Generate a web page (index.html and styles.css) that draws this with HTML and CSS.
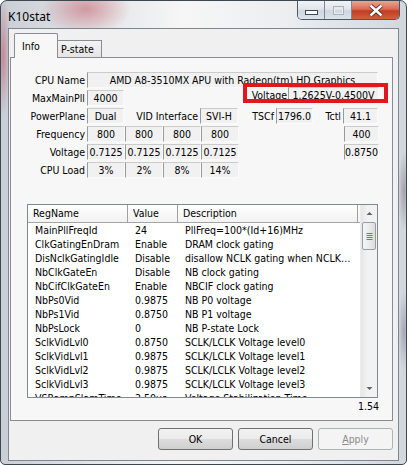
FILE: index.html
```html
<!DOCTYPE html>
<html>
<head>
<meta charset="utf-8">
<link rel="stylesheet" href="styles.css">
</head>
<body>
<div class="window">
  <div class="titlebar">
    <span class="title">K10stat</span>
    <div class="caption">
      <div class="cb cb-min">
        <svg width="27" height="18" viewBox="0 0 27 18"><rect x="7.5" y="9.5" width="12" height="4" fill="#fff" stroke="#3e4a57"/></svg>
      </div>
      <div class="cb cb-max">
        <svg width="27" height="18" viewBox="0 0 27 18"><rect x="8.5" y="5.5" width="10" height="8" fill="none" stroke="#a9b2bd"/><rect x="9.5" y="7.5" width="8" height="5" fill="none" stroke="#e8ecf0"/></svg>
      </div>
      <div class="cb cb-close">
        <svg width="48" height="18" viewBox="0 0 48 18"><path d="M18.5 4.5 L29.5 14.5 M29.5 4.5 L18.5 14.5" stroke="#4a2a24" stroke-width="4.2"/><path d="M18.5 4.5 L29.5 14.5 M29.5 4.5 L18.5 14.5" stroke="#fff" stroke-width="2.4"/></svg>
      </div>
    </div>
  </div>
  <div class="client">
    <div class="tabs">
      <div class="tab tab-active">Info</div>
      <div class="tab">P-state</div>
    </div>
    <div class="panel">
      <div class="info">
        <div class="row">
          <div class="lbl">CPU Name</div>
          <div class="box w291">AMD A8-3510MX APU with Radeon(tm) HD Graphics</div>
        </div>
        <div class="row">
          <div class="lbl">MaxMainPll</div>
          <div class="box w37">4000</div>
          <div class="spacer"></div>
          <div class="lbl-auto raised">Voltage</div>
          <div class="box w91 raised">1.2625V-0.4500V</div>
        </div>
        <div class="row">
          <div class="lbl">PowerPlane</div>
          <div class="box w37">Dual</div>
          <div class="lbl lbl-vid">VID Interface</div>
          <div class="box w38">SVI-H</div>
          <div class="lbl lbl-tscf">TSCf</div>
          <div class="box w37">1796.0</div>
          <div class="lbl lbl-tctl">Tctl</div>
          <div class="box w35">41.1</div>
        </div>
        <div class="row">
          <div class="lbl">Frequency</div>
          <div class="box w38">800</div>
          <div class="box w38">800</div>
          <div class="box w38">800</div>
          <div class="box w38">800</div>
          <div class="spacer"></div>
          <div class="box w35">400</div>
        </div>
        <div class="row">
          <div class="lbl">Voltage</div>
          <div class="box w38">0.7125</div>
          <div class="box w38">0.7125</div>
          <div class="box w38">0.7125</div>
          <div class="box w38">0.7125</div>
          <div class="spacer"></div>
          <div class="box w35">0.8750</div>
        </div>
        <div class="row">
          <div class="lbl">CPU Load</div>
          <div class="box w38">3%</div>
          <div class="box w38">2%</div>
          <div class="box w38">8%</div>
          <div class="box w38">14%</div>
        </div>
      </div>
      <div class="list">
        <div class="lv-main">
          <div class="lv-head">
            <div class="hc c-name">RegName</div>
            <div class="hc c-val">Value</div>
            <div class="hc c-desc">Description</div>
          </div>
          <div class="lv-row"><div class="c c-name">MainPllFreqId</div><div class="c c-val">24</div><div class="c c-desc">PllFreq=100*(Id+16)MHz</div></div>
          <div class="lv-row"><div class="c c-name">ClkGatingEnDram</div><div class="c c-val">Enable</div><div class="c c-desc">DRAM clock gating</div></div>
          <div class="lv-row"><div class="c c-name">DisNclkGatingIdle</div><div class="c c-val">Disable</div><div class="c c-desc">disallow NCLK gating when NCLK…</div></div>
          <div class="lv-row"><div class="c c-name">NbClkGateEn</div><div class="c c-val">Disable</div><div class="c c-desc">NB clock gating</div></div>
          <div class="lv-row"><div class="c c-name">NbCifClkGateEn</div><div class="c c-val">Enable</div><div class="c c-desc">NBCIF clock gating</div></div>
          <div class="lv-row"><div class="c c-name">NbPs0Vid</div><div class="c c-val">0.9875</div><div class="c c-desc">NB P0 voltage</div></div>
          <div class="lv-row"><div class="c c-name">NbPs1Vid</div><div class="c c-val">0.8750</div><div class="c c-desc">NB P1 voltage</div></div>
          <div class="lv-row"><div class="c c-name">NbPsLock</div><div class="c c-val">0</div><div class="c c-desc">NB P-state Lock</div></div>
          <div class="lv-row"><div class="c c-name">SclkVidLvl0</div><div class="c c-val">0.8750</div><div class="c c-desc">SCLK/LCLK Voltage level0</div></div>
          <div class="lv-row"><div class="c c-name">SclkVidLvl1</div><div class="c c-val">0.9875</div><div class="c c-desc">SCLK/LCLK Voltage level1</div></div>
          <div class="lv-row"><div class="c c-name">SclkVidLvl2</div><div class="c c-val">0.9875</div><div class="c c-desc">SCLK/LCLK Voltage level2</div></div>
          <div class="lv-row"><div class="c c-name">SclkVidLvl3</div><div class="c c-val">0.9875</div><div class="c c-desc">SCLK/LCLK Voltage level3</div></div>
          <div class="lv-row"><div class="c c-name">VSRampSlamTime</div><div class="c c-val">2.50us</div><div class="c c-desc">Voltage Stabilization Time</div></div>
        </div>
        <div class="sb">
          <div class="sb-btn">
            <svg width="15" height="15" viewBox="0 0 15 15"><path d="M4.5 9 L7.5 6 L10.5 9 Z" fill="#59646f"/></svg>
          </div>
          <div class="sb-thumb">
            <svg width="13" height="28" viewBox="0 0 13 28"><path d="M3.5 10.5h6M3.5 12.5h6M3.5 14.5h6M3.5 16.5h6" stroke="#6d7a87"/></svg>
          </div>
          <div class="sb-track"></div>
          <div class="sb-btn">
            <svg width="15" height="15" viewBox="0 0 15 15"><path d="M4.5 6 L7.5 9 L10.5 6 Z" fill="#59646f"/></svg>
          </div>
        </div>
      </div>
      <div class="ver">1.54</div>
    </div>
    <div class="btnrow">
      <div class="btn">OK</div>
      <div class="btn">Cancel</div>
      <div class="btn btn-dis"><span class="ul">A</span>pply</div>
    </div>
  </div>
</div>
<div class="annot"></div>
</body>
</html>
```
FILE: styles.css
```css
html, body {
  margin: 0;
  padding: 0;
}
body {
  width: 407px;
  height: 465px;
  overflow: hidden;
  background: #fff;
  font-family: "DejaVu Sans Condensed", "DejaVu Sans", sans-serif;
  font-stretch: condensed;
  font-size: 10.5px;
  color: #000;
}
.window {
  box-sizing: border-box;
  width: 407px;
  height: 465px;
  border: 1px solid #3d4752;
  border-radius: 7px 7px 5px 5px;
  overflow: hidden;
  background:
    radial-gradient(ellipse 45px 26px at 85px 8px, rgba(196, 92, 104, 0.55), rgba(196, 92, 104, 0)),
    radial-gradient(ellipse 8px 60px at 2px 55px, rgba(186, 84, 96, 0.55), rgba(186, 84, 96, 0)),
    radial-gradient(ellipse 6px 40px at 403px 190px, rgba(110, 110, 120, 0.5), rgba(110, 110, 120, 0)),
    radial-gradient(ellipse 6px 40px at 403px 330px, rgba(110, 110, 130, 0.45), rgba(110, 110, 130, 0)),
    linear-gradient(90deg, #c9ced5 0%, #e2e4e7 22%, #f6f6f6 45%, #eceef0 70%, #d2d7dd 100%);
}
.titlebar {
  height: 27px;
  display: flex;
  justify-content: space-between;
  align-items: flex-start;
  padding: 0 6px 0 7px;
}
.title {
  font-family: "Noto Sans", "DejaVu Sans", sans-serif;
  font-stretch: normal;
  font-size: 12px;
  line-height: 14px;
  margin-top: 9px;
  color: #000;
}
.caption {
  display: flex;
  border: 1px solid #4b5866;
  border-top: none;
  border-radius: 0 0 5px 5px;
  overflow: hidden;
  height: 18px;
}
.cb {
  height: 18px;
}
.cb svg {
  display: block;
}
.cb-min, .cb-max {
  width: 27px;
  background: linear-gradient(#f1f3f6 0%, #e1e5ea 45%, #cfd6de 55%, #dde3ea 100%);
  border-right: 1px solid #7d8894;
  box-sizing: border-box;
}
.cb-close {
  width: 47px;
  background: linear-gradient(#e9a595 0%, #d96b55 45%, #c53d22 55%, #d0603f 100%);
}
.client {
  box-sizing: border-box;
  width: 391px;
  height: 433px;
  margin-left: 7px;
  border: 1px solid #7c8793;
  background: #f0f0f0;
  padding: 4px 5px 0 1px;
}
.tabs {
  display: flex;
  align-items: flex-end;
  height: 24px;
  margin-left: 4px;
  position: relative;
  z-index: 1;
}
.tab {
  box-sizing: border-box;
  height: 17px;
  width: 44px;
  border: 1px solid #898c95;
  border-bottom: none;
  border-left: none;
  background: linear-gradient(#f3f3f3, #e4e4e4);
  padding: 1px 0 0 3px;
  line-height: 14px;
  white-space: nowrap;
}
.tab-active {
  height: 25px;
  width: 44px;
  margin-bottom: -1px;
  border-left: 1px solid #898c95;
  border-radius: 2px 2px 0 0;
  background: #f7f7f7;
  padding: 5px 0 0 7px;
}
.panel {
  box-sizing: border-box;
  width: 383px;
  height: 364px;
  border: 1px solid #898c95;
  background: #f7f7f7;
  padding-top: 14px;
}
.info {
  padding-right: 13px;
}
.row {
  display: flex;
  height: 16px;
  margin-bottom: 2px;
}
.lbl {
  box-sizing: border-box;
  width: 76px;
  padding-right: 2px;
  text-align: right;
  line-height: 16px;
  white-space: nowrap;
}
.lbl-vid {
  width: 76px;
}
.lbl-tscf {
  width: 38px;
}
.lbl-tctl {
  width: 30px;
}
.lbl-auto {
  line-height: 16px;
  padding-right: 1px;
  white-space: nowrap;
}
.raised {
  margin-top: -3px;
}
.spacer {
  flex: 1;
}
.box {
  box-sizing: border-box;
  height: 16px;
  line-height: 14px;
  text-align: center;
  white-space: nowrap;
  overflow: hidden;
  background: #f1f1f1;
  border-left: 1px solid #999;
  border-top: 1px solid #cbcbcb;
  border-right: 1px solid #fbfbfb;
  border-bottom: 1px solid #fbfbfb;
}
.w291 { width: 291px; }
.w37 { width: 37px; }
.w38 { width: 38px; }
.w35 { width: 35px; }
.w91 { width: 91px; }
.list {
  box-sizing: border-box;
  margin: 26px 0 0 16px;
  width: 351px;
  height: 194px;
  border: 1px solid #828790;
  background: #fff;
  display: flex;
}
.lv-main {
  flex: 1;
  overflow: hidden;
}
.lv-head {
  display: flex;
  height: 18px;
  background: linear-gradient(#ffffff, #f2f2f2);
  border-bottom: 1px solid #a5a5a5;
  box-sizing: border-box;
}
.hc {
  box-sizing: border-box;
  line-height: 17px;
  padding-left: 5px;
  border-right: 1px solid #a0a0a0;
  white-space: nowrap;
}
.lv-row {
  display: flex;
  height: 14px;
  line-height: 14px;
}
.c {
  box-sizing: border-box;
  padding-left: 7px;
  white-space: nowrap;
  overflow: hidden;
}
.c-name { width: 100px; flex: none; }
.c-val { width: 50px; flex: none; }
.c-desc { width: 180px; flex: none; }
.sb {
  width: 17px;
  display: flex;
  flex-direction: column;
  background: linear-gradient(90deg, #e6e6e6, #f2f2f2 40%, #f2f2f2);
  border-left: 1px solid #ececec;
  box-sizing: border-box;
}
.sb-btn {
  height: 17px;
  display: flex;
  align-items: center;
  justify-content: center;
  flex: none;
}
.sb-thumb {
  box-sizing: border-box;
  height: 28px;
  margin: 0 1px;
  border: 1px solid #989ca3;
  border-radius: 2px;
  background: linear-gradient(90deg, #f4f4f4, #ebebeb 50%, #dcdcdc);
  flex: none;
}
.sb-thumb svg {
  display: block;
}
.sb-track {
  flex: 1;
}
.ver {
  height: 16px;
  line-height: 16px;
  text-align: right;
  padding-right: 13px;
}
.btnrow {
  display: flex;
  justify-content: flex-end;
  gap: 5px;
  margin-top: 7px;
}
.btn {
  box-sizing: border-box;
  width: 75px;
  height: 22px;
  border: 1px solid #707070;
  border-radius: 3px;
  background: linear-gradient(#f2f2f2 0%, #ebebeb 50%, #dddddd 50%, #cfcfcf 100%);
  text-align: center;
  line-height: 20px;
}
.btn-dis {
  border-color: #adb2b5;
  background: #f4f4f4;
  color: #8b8b8b;
}
.ul {
  text-decoration: underline;
}
.annot {
  position: absolute;
  left: 243px;
  top: 83px;
  width: 145px;
  height: 20px;
  box-sizing: border-box;
  border: 4px solid #e3161f;
}
```
